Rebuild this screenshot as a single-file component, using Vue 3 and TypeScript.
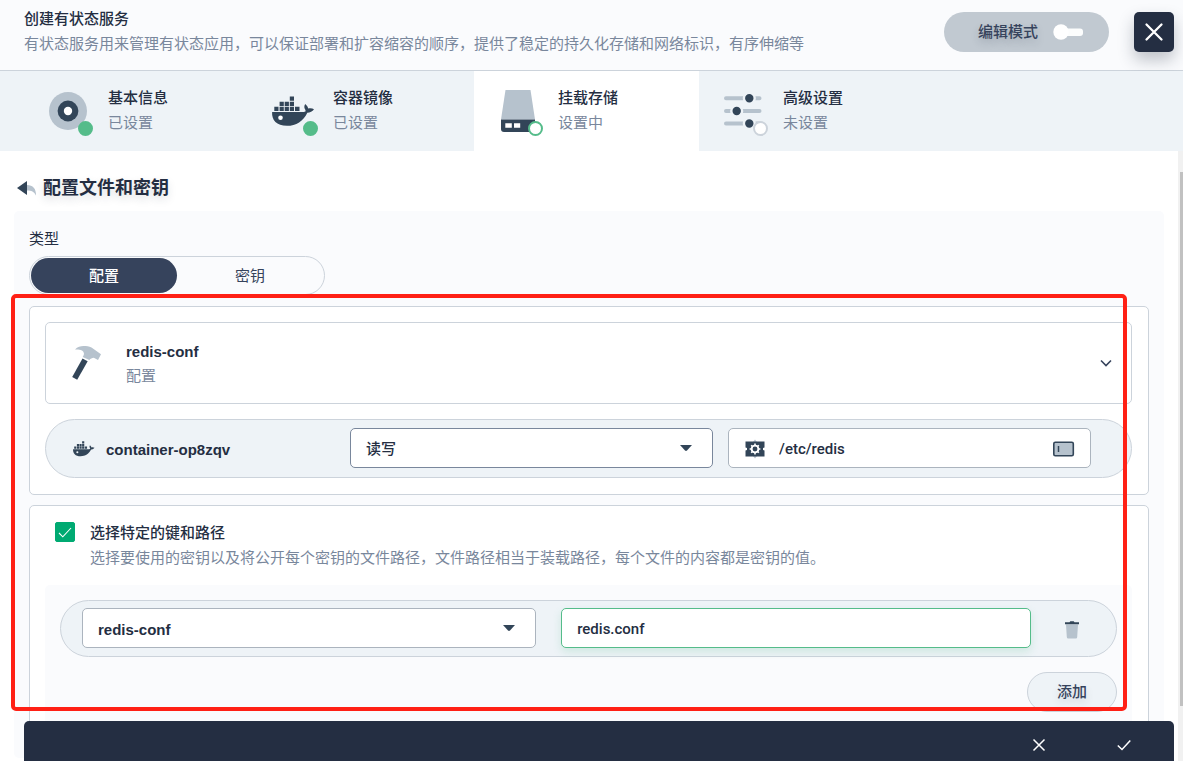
<script setup lang="ts">
import { ref } from 'vue'

type Status = 'done' | 'active' | 'pending'
type TabIcon = 'disc' | 'whale' | 'drive' | 'sliders'

interface Tab {
  title: string
  note: string
  status: Status
  icon: TabIcon
}

const tabs: Tab[] = [
  { title: '基本信息', note: '已设置', status: 'done', icon: 'disc' },
  { title: '容器镜像', note: '已设置', status: 'done', icon: 'whale' },
  { title: '挂载存储', note: '设置中', status: 'active', icon: 'drive' },
  { title: '高级设置', note: '未设置', status: 'pending', icon: 'sliders' },
]

const kinds = ['配置', '密钥']
const kind = ref('配置')
const access = ref('读写')
const mountPath = ref('/etc/redis')
const specific = ref(true)
const itemKey = ref('redis-conf')
const itemPath = ref('redis.conf')
const editMode = ref(false)
</script>

<template>
  <div class="page">
    <header class="header">
      <div class="heading">
        <h1>创建有状态服务</h1>
        <p>有状态服务用来管理有状态应用，可以保证部署和扩容缩容的顺序，提供了稳定的持久化存储和网络标识，有序伸缩等</p>
      </div>
      <button class="edit-mode" type="button" :aria-pressed="editMode" @click="editMode = !editMode">
        <span>编辑模式</span>
        <svg width="32" height="16" viewBox="0 0 32 16" aria-hidden="true">
          <rect x="8" y="4.500" width="23" height="7.500" rx="3" fill="#fcfdfd" />
          <circle cx="9" cy="8" r="7.700" fill="#fff" />
        </svg>
      </button>
      <button class="close" type="button" aria-label="关闭">
        <svg width="20" height="20" viewBox="0 0 20 20" aria-hidden="true">
          <path d="M2.500 2.500 17.500 17.500M17.500 2.500 2.500 17.500" stroke="#fff" stroke-width="2.300" stroke-linecap="round" />
        </svg>
      </button>
    </header>

    <nav class="tabs">
      <button v-for="tab in tabs" :key="tab.title" class="tab" :class="tab.status" type="button">
        <span class="tab-icon">
          <svg width="48" height="48" viewBox="0 0 48 48" aria-hidden="true">
            <template v-if="tab.icon === 'disc'">
              <circle cx="20" cy="24" r="19" fill="#b6c2cd" />
              <circle cx="20" cy="24" r="10.400" fill="#324558" />
              <circle cx="20" cy="24" r="4.200" fill="#fff" />
            </template>
            <g v-else-if="tab.icon === 'whale'" fill="#324558">
              <path d="M-.9 25H30.500C32.500 25 33 24 32.300 22.700 31 21 31 19 32.200 17 34 18.500 35 20 35.200 21.600 37 21 39.500 21.300 41 22.300 39.500 24.500 37 25.700 34.300 25.700 30.500 34 23 38.800 14 38.800 3.500 38.800-1.400 33-.9 25Z" />
              <path d="M1.300 19.700h4.200v4.300H1.300zM6.600 19.700h4.200v4.300H6.600zM11.700 19.700h4.200v4.300h-4.200zM16.800 19.700H21v4.300h-4.200zM22 19.700h4.500v4.300H22zM6.600 14.700h4.200V19H6.600zM11.700 14.700h4.200V19h-4.200zM16.800 14.700H21V19h-4.200zM16.800 9.500H21v4.200h-4.200z" />
              <circle cx="7.500" cy="30.700" r="2.300" fill="#fff" />
            </g>
            <template v-else-if="tab.icon === 'drive'">
              <path d="M7.500 3h25l4.500 29.500H3z" fill="#b6c2cd" />
              <path d="M3 32.500h34V45H6a3 3 0 0 1-3-3z" fill="#324558" />
              <path d="M7.300 36.200h6.500v4.600H7.300zM16 36.200h6.200v4.600H16z" fill="#fff" />
            </template>
            <template v-else>
              <path d="M3 11.300h33.500M3 24h33.500M3 36.500h33.500" stroke="#b6c2cd" stroke-width="4" stroke-linecap="round" />
              <g fill="#324558" stroke="#eef3f7" stroke-width="2.400">
                <circle cx="26.300" cy="11.300" r="5.400" />
                <circle cx="13.700" cy="24" r="5.400" />
                <circle cx="26.300" cy="36.500" r="5.400" />
              </g>
            </template>
          </svg>
          <i class="badge"></i>
        </span>
        <span class="tab-text">
          <strong>{{ tab.title }}</strong>
          <small>{{ tab.note }}</small>
        </span>
      </button>
    </nav>

    <main class="content">
      <div class="body">
        <h2>
          <svg width="20" height="16" viewBox="0 0 20 16" aria-hidden="true">
            <path d="M10 5C16 5 19 8.500 19 15.500 17 11.500 14.500 10.500 10 10.500z" fill="#b6c2cd" />
            <path d="M0 8 10 1v14z" fill="#324558" />
          </svg>
          <span>配置文件和密钥</span>
        </h2>

        <section class="panel">
          <div class="label">类型</div>
          <div class="segment">
            <button
              v-for="k in kinds"
              :key="k"
              type="button"
              :class="{ on: kind === k }"
              @click="kind = k"
            >{{ k }}</button>
          </div>

          <div class="card source">
            <button class="picker" type="button">
              <svg width="30" height="34" viewBox="0 0 30 34" aria-hidden="true">
                <path d="M3 3.500C5.500.8 8.500 0 11.500 0c3 0 5.500 0 8 1.500L29 8.300 26 14 21.800 11.800C20 12 18.500 12.700 17.300 14L10.700 11C12.800 8.500 12.300 6.300 10 4.600 8 3.500 5.500 3.300 3 3.500Z" fill="#b6c2cd" />
                <path d="M10.500 12.500 15.700 15.200 5.200 33.800.2 31z" fill="#324558" />
              </svg>
              <span class="picker-text">
                <strong class="name">redis-conf</strong>
                <small>配置</small>
              </span>
              <svg width="14" height="10" viewBox="0 0 14 10" aria-hidden="true">
                <path d="M2 2.500 7 7.500 12 2.500" fill="none" stroke="#36435c" stroke-width="1.600" />
              </svg>
            </button>

            <div class="mount">
              <div class="container-name">
                <svg width="22" height="16" viewBox="-1 9 43 31" aria-hidden="true">
                  <g fill="#324558">
                    <path d="M-.9 25H30.500C32.500 25 33 24 32.300 22.700 31 21 31 19 32.200 17 34 18.500 35 20 35.200 21.600 37 21 39.500 21.300 41 22.300 39.500 24.500 37 25.700 34.300 25.700 30.500 34 23 38.800 14 38.800 3.500 38.800-1.400 33-.9 25Z" />
                    <path d="M1.300 19.700h4.200v4.300H1.300zM6.600 19.700h4.200v4.300H6.600zM11.700 19.700h4.200v4.300h-4.200zM16.800 19.700H21v4.300h-4.200zM22 19.700h4.500v4.300H22zM6.600 14.700h4.200V19H6.600zM11.700 14.700h4.200V19h-4.200zM16.800 14.700H21V19h-4.200zM16.800 9.500H21v4.200h-4.200z" />
                  </g>
                  <circle cx="7.500" cy="30.700" r="2" fill="#eef3f7" />
                </svg>
                <span class="name">container-op8zqv</span>
              </div>
              <div class="field strong">
                <select v-model="access" aria-label="读写权限">
                  <option>读写</option>
                  <option>只读</option>
                </select>
                <svg width="12" height="6" viewBox="0 0 12 6" aria-hidden="true">
                  <path d="M0 0h12L7 5.500q-1 .8-2 0z" fill="#324558" />
                </svg>
              </div>
              <div class="field path">
                <svg width="20" height="20" viewBox="0 0 20 20" aria-hidden="true">
                  <path d="M10 .5l2 2.500H8zM10 19.500l2-2.500H8z" fill="#b6c2cd" />
                  <path d="M.5 2.500h19v6L18 9v2l1.500.5v6H.5v-6L2 11V9L.5 8.500z" fill="#324558" />
                  <circle cx="10" cy="10" r="3.400" fill="none" stroke="#fff" stroke-width="1.900" />
                  <path d="M10 4.600v2M10 13.400v2M4.600 10h2M13.400 10h2M6.200 6.200l1.400 1.400M12.400 12.400l1.400 1.400M6.200 13.800l1.400-1.400M12.400 7.600l1.400-1.400" stroke="#fff" stroke-width="1.600" />
                </svg>
                <input v-model="mountPath" type="text" aria-label="挂载路径" />
                <svg width="21" height="16" viewBox="0 0 21 16" aria-hidden="true">
                  <rect x=".8" y="1.300" width="19.500" height="13.500" rx="1.500" fill="#b6c2cd" stroke="#324558" stroke-width="1.600" />
                  <path d="M5.500 5v6" stroke="#324558" stroke-width="1.500" />
                </svg>
              </div>
            </div>
          </div>

          <div class="card keys">
            <label class="check">
              <span class="box">
                <input v-model="specific" type="checkbox" />
                <svg v-if="specific" width="14" height="12" viewBox="0 0 14 12" aria-hidden="true">
                  <path d="M1 7 4.800 10.800 13 2" fill="none" stroke="#fff" stroke-width="1.100" />
                </svg>
              </span>
              <span class="check-text">
                <strong>选择特定的键和路径</strong>
                <small>选择要使用的密钥以及将公开每个密钥的文件路径，文件路径相当于装载路径，每个文件的内容都是密钥的值。</small>
              </span>
            </label>

            <div class="items">
              <div class="item">
                <div class="field">
                  <select v-model="itemKey" class="name" aria-label="键">
                    <option>redis-conf</option>
                  </select>
                  <svg width="12" height="6" viewBox="0 0 12 6" aria-hidden="true">
                    <path d="M0 0h12L7 5.500q-1 .8-2 0z" fill="#324558" />
                  </svg>
                </div>
                <div class="field valid">
                  <input v-model="itemPath" type="text" aria-label="文件路径" />
                </div>
                <button class="trash" type="button" aria-label="删除">
                  <svg width="16" height="18" viewBox="0 0 16 18" aria-hidden="true">
                    <path d="M2 3.500h12l-.8 12.500a1.500 1.500 0 0 1-1.500 1.500H4.300A1.500 1.500 0 0 1 2.800 16z" fill="#b6c2cd" />
                    <path d="M1 1.200h4.500L6.300.3h3.400l.8.9H15v2H1z" fill="#324558" />
                  </svg>
                </button>
              </div>
              <button class="add" type="button">添加</button>
            </div>
          </div>
        </section>
      </div>
      <div class="scrollbar"><div class="thumb"></div></div>
      <footer class="footer">
        <button type="button" aria-label="取消">
          <svg width="14" height="14" viewBox="0 0 14 14" aria-hidden="true">
            <path d="M1.500 1.500l11 11M12.500 1.500l-11 11" stroke="#fff" stroke-width="1.500" />
          </svg>
        </button>
        <button type="button" aria-label="确定">
          <svg width="14" height="14" viewBox="0 0 14 14" aria-hidden="true">
            <path d="M.8 7.500 5 11.500 13.300 2.500" fill="none" stroke="#fff" stroke-width="1.500" />
          </svg>
        </button>
      </footer>
      <div class="highlight"></div>
    </main>
  </div>
</template>

<style>
html,
body {
  margin: 0;
  overflow: hidden;
}
</style>

<style scoped>
.page {
  display: flex;
  flex-direction: column;
  height: 100vh;
  overflow: hidden;
  background: #fff;
  color: #242e42;
  font-family: Roboto, "Noto Sans CJK SC", sans-serif;
  font-size: 15px;
  line-height: 25px;
}

.page * {
  box-sizing: border-box;
}

button,
input,
select {
  margin: 0;
  padding: 0;
  border: 0;
  background: none;
  color: inherit;
  font: inherit;
  outline: none;
}

button {
  cursor: pointer;
}

svg {
  display: block;
  flex: none;
  overflow: visible;
}

h1,
h2,
p {
  margin: 0;
}

strong {
  font-weight: 500;
}

small {
  color: #79879c;
  font-size: 15px;
}

.name {
  font-family: "Liberation Sans", Arial, sans-serif;
  font-weight: 700;
}

.header {
  display: flex;
  align-items: flex-start;
  gap: 25px;
  padding: 7px 9px 13px 24px;
  border-bottom: 1px solid #ccd3db;
  background: #fafbfd;
}

.heading {
  flex: 1;
  min-width: 0;
  height: 50px;
}

.heading h1 {
  font-size: 15px;
  font-weight: 500;
}

.heading p {
  color: #79879c;
  white-space: nowrap;
}

.edit-mode {
  display: flex;
  align-items: center;
  gap: 14px;
  height: 40px;
  margin-top: 5px;
  padding: 0 25px 0 34px;
  border-radius: 20px;
  background: #c1c9d1;
  color: #36435c;
  font-weight: 500;
  text-shadow: 0 4px 8px rgba(36, 46, 66, 0.2);
}

.close {
  display: grid;
  place-items: center;
  width: 40px;
  height: 40px;
  margin-top: 5px;
  border-radius: 5px;
  background: #242e42;
  box-shadow: 0 8px 16px rgba(36, 46, 66, 0.28);
}

.tabs {
  display: flex;
  padding-left: 24px;
  background: #eef3f7;
}

.tab {
  display: flex;
  align-items: center;
  gap: 12px;
  width: 225px;
  height: 80px;
  padding: 0 24px;
  text-align: left;
}

.tab.active {
  background: #fff;
}

.tab-icon {
  position: relative;
}

.badge {
  position: absolute;
  right: 3px;
  bottom: -1px;
  width: 15px;
  height: 15px;
  border: 2px solid #55bc8a;
  border-radius: 50%;
  background: #55bc8a;
}

.active .badge {
  background: #fff;
}

.pending .badge {
  border-color: #ccd3db;
  background: #fff;
}

.tab-text,
.picker-text,
.check-text {
  display: flex;
  flex-direction: column;
}

.content {
  position: relative;
  display: flex;
  flex: 1;
  min-height: 0;
}

.body {
  flex: 1;
  min-width: 0;
  overflow: hidden;
  padding: 22px 14px 0;
}

h2 {
  display: flex;
  align-items: center;
  gap: 6px;
  padding-left: 3px;
  font-size: 18px;
  font-weight: 700;
  line-height: 30px;
  text-shadow: 0 4px 8px rgba(36, 46, 66, 0.15);
}

.panel {
  margin-top: 8px;
  padding: 16px 15px 15px;
  border-radius: 5px;
  background: #fafbfd;
}

.segment {
  display: flex;
  width: 296px;
  margin-top: 4px;
  padding: 1px;
  border: 1px solid #ccd3db;
  border-radius: 20px;
  background: #fafbfd;
}

.segment button {
  flex: 1;
  height: 35px;
  padding-top: 1px;
  border-radius: 18px;
  color: #36435c;
}

.segment .on {
  background: #36435c;
  color: #fff;
  font-weight: 500;
}

.card {
  border: 1px solid #ccd3db;
  border-radius: 5px;
  background: #fff;
}

.source {
  margin-top: 11px;
  padding: 15px 16px 16px 15px;
}

.picker {
  display: flex;
  align-items: center;
  width: 100%;
  height: 82px;
  padding: 0 18px 0 26px;
  border: 1px solid #ccd3db;
  border-radius: 5px;
  text-align: left;
}

.picker-text {
  flex: 1;
  margin-left: 24px;
  padding-top: 2px;
}

.mount {
  display: grid;
  grid-template-columns: 13fr 18fr 18fr;
  align-items: center;
  gap: 15px;
  margin-top: 15px;
  padding: 8px 40px 9px 27px;
  border: 1px solid #ccd3db;
  border-radius: 30px;
  background: #eef3f7;
}

.container-name {
  display: flex;
  align-items: center;
  gap: 11px;
  padding-top: 2px;
}

.field {
  display: grid;
  align-items: center;
  min-width: 0;
  height: 40px;
  border: 1px solid #abb4be;
  border-radius: 5px;
  background: #fff;
  font-weight: 500;
}

.field select,
.field input {
  grid-area: 1 / 1;
  width: 100%;
  height: 38px;
  padding: 2px 15px 0;
  appearance: none;
}

.field select + svg {
  grid-area: 1 / 1;
  justify-self: end;
  margin-right: 20px;
  pointer-events: none;
}

.strong {
  border-color: #79879c;
}

.path {
  display: flex;
  padding: 2px 16px 0;
}

.field.path input {
  flex: 1;
  min-width: 0;
  height: 36px;
  padding: 0 14px;
}

.valid {
  border-color: #55bc8a;
  box-shadow: 0 4px 8px rgba(85, 188, 138, 0.2);
}

.keys {
  margin-top: 10px;
  padding: 15px 16px 15px 15px;
}

.check {
  display: flex;
  gap: 15px;
  padding-left: 10px;
}

.box {
  display: grid;
  place-items: center;
  width: 20px;
  height: 20px;
  margin-top: 1px;
}

.box input {
  grid-area: 1 / 1;
  width: 20px;
  height: 20px;
  border: 1px solid #00aa72;
  border-radius: 2px;
  appearance: none;
}

.box input:checked {
  background: #00aa72;
}

.box svg {
  grid-area: 1 / 1;
  pointer-events: none;
}

.items {
  display: flex;
  flex-direction: column;
  gap: 15px;
  margin-top: 14px;
  padding: 15px;
  border-radius: 5px;
  background: #fafbfd;
}

.item {
  display: grid;
  grid-template-columns: 29fr 30fr 32px;
  align-items: center;
  gap: 25px;
  padding: 7px 28px 8px 21px;
  border: 1px solid #ccd3db;
  border-radius: 29px;
  background: #eef3f7;
}

.trash {
  display: grid;
  place-items: center;
  height: 32px;
  padding-top: 3px;
}

.add {
  align-self: flex-end;
  width: 90px;
  height: 40px;
  padding-top: 1px;
  border: 1px solid #ccd3db;
  border-radius: 20px;
  background: #eef3f7;
  color: #36435c;
  font-weight: 500;
  text-shadow: 0 4px 8px rgba(36, 46, 66, 0.15);
}

.scrollbar {
  width: 5px;
  padding: 21px 0 55px 2px;
  background: #f1f1f1;
}

.thumb {
  height: 100%;
  background: #c1c1c1;
}

.footer {
  position: absolute;
  right: 9px;
  bottom: 0;
  left: 24px;
  display: flex;
  align-items: center;
  justify-content: flex-end;
  gap: 45px;
  height: 40px;
  padding: 8px 30px 0;
  border-radius: 5px 5px 0 0;
  background: #242e42;
}

.footer button {
  display: grid;
  place-items: center;
  width: 40px;
  height: 32px;
}

.highlight {
  position: absolute;
  top: 143px;
  right: 56px;
  bottom: 50px;
  left: 11px;
  border: 4px solid #ff2015;
  border-radius: 5px;
  pointer-events: none;
}
</style>
